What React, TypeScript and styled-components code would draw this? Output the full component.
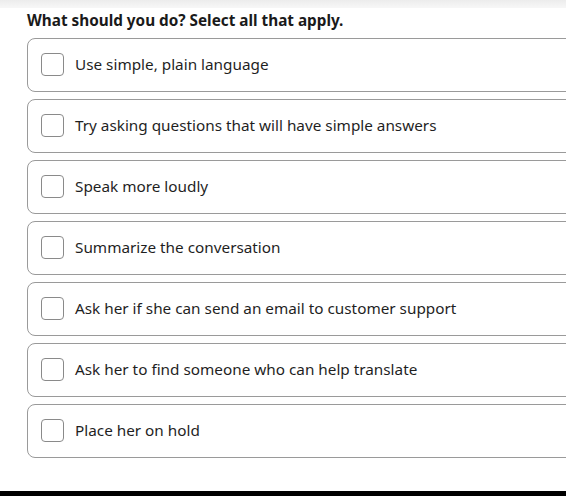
import React from "react";
import styled, { createGlobalStyle } from "styled-components";

const Global = createGlobalStyle`
  html, body { margin: 0; padding: 0; background: #fff; }
  body { font-family: "Noto Sans", "Open Sans", sans-serif; color: #1a1a1a; }
`;

const Page = styled.div`
  width: 566px;
  height: 496px;
  display: flex;
  flex-direction: column;
  overflow: hidden;
  background: #fff;
`;

const TopStrip = styled.div`
  height: 8px;
  flex: none;
  background: linear-gradient(#ececec, #f7f7f7);
`;

const Content = styled.div`
  flex: 1;
  padding: 0 0 0 27px;
`;

const Title = styled.h2`
  margin: 2px 0 7px 0;
  font-size: 15.3px;
  line-height: 21px;
  font-weight: 700;
  color: #1a1a1a;
`;

const List = styled.div`
  display: flex;
  flex-direction: column;
  gap: 7px;
  margin-right: -12px;
`;

const Option = styled.label`
  display: flex;
  align-items: center;
  gap: 11px;
  height: 54px;
  box-sizing: border-box;
  border: 1px solid #9a9a9a;
  border-radius: 8px;
  padding: 0 0 2px 13px;
  font-size: 15.3px;
  color: #1f1f1f;
  cursor: pointer;
`;

const Box = styled.span`
  width: 23px;
  height: 23px;
  box-sizing: border-box;
  border: 1px solid #8a8a8a;
  border-radius: 4px;
  background: #fff;
  flex: none;
`;

const BottomBar = styled.div`
  height: 5px;
  flex: none;
  background: #000;
`;

const options = [
  "Use simple, plain language",
  "Try asking questions that will have simple answers",
  "Speak more loudly",
  "Summarize the conversation",
  "Ask her if she can send an email to customer support",
  "Ask her to find someone who can help translate",
  "Place her on hold",
];

export default function App() {
  return (
    <Page>
      <Global />
      <TopStrip />
      <Content>
        <Title>What should you do? Select all that apply.</Title>
        <List>
          {options.map((o) => (
            <Option key={o}>
              <Box />
              <span>{o}</span>
            </Option>
          ))}
        </List>
      </Content>
      <BottomBar />
    </Page>
  );
}
